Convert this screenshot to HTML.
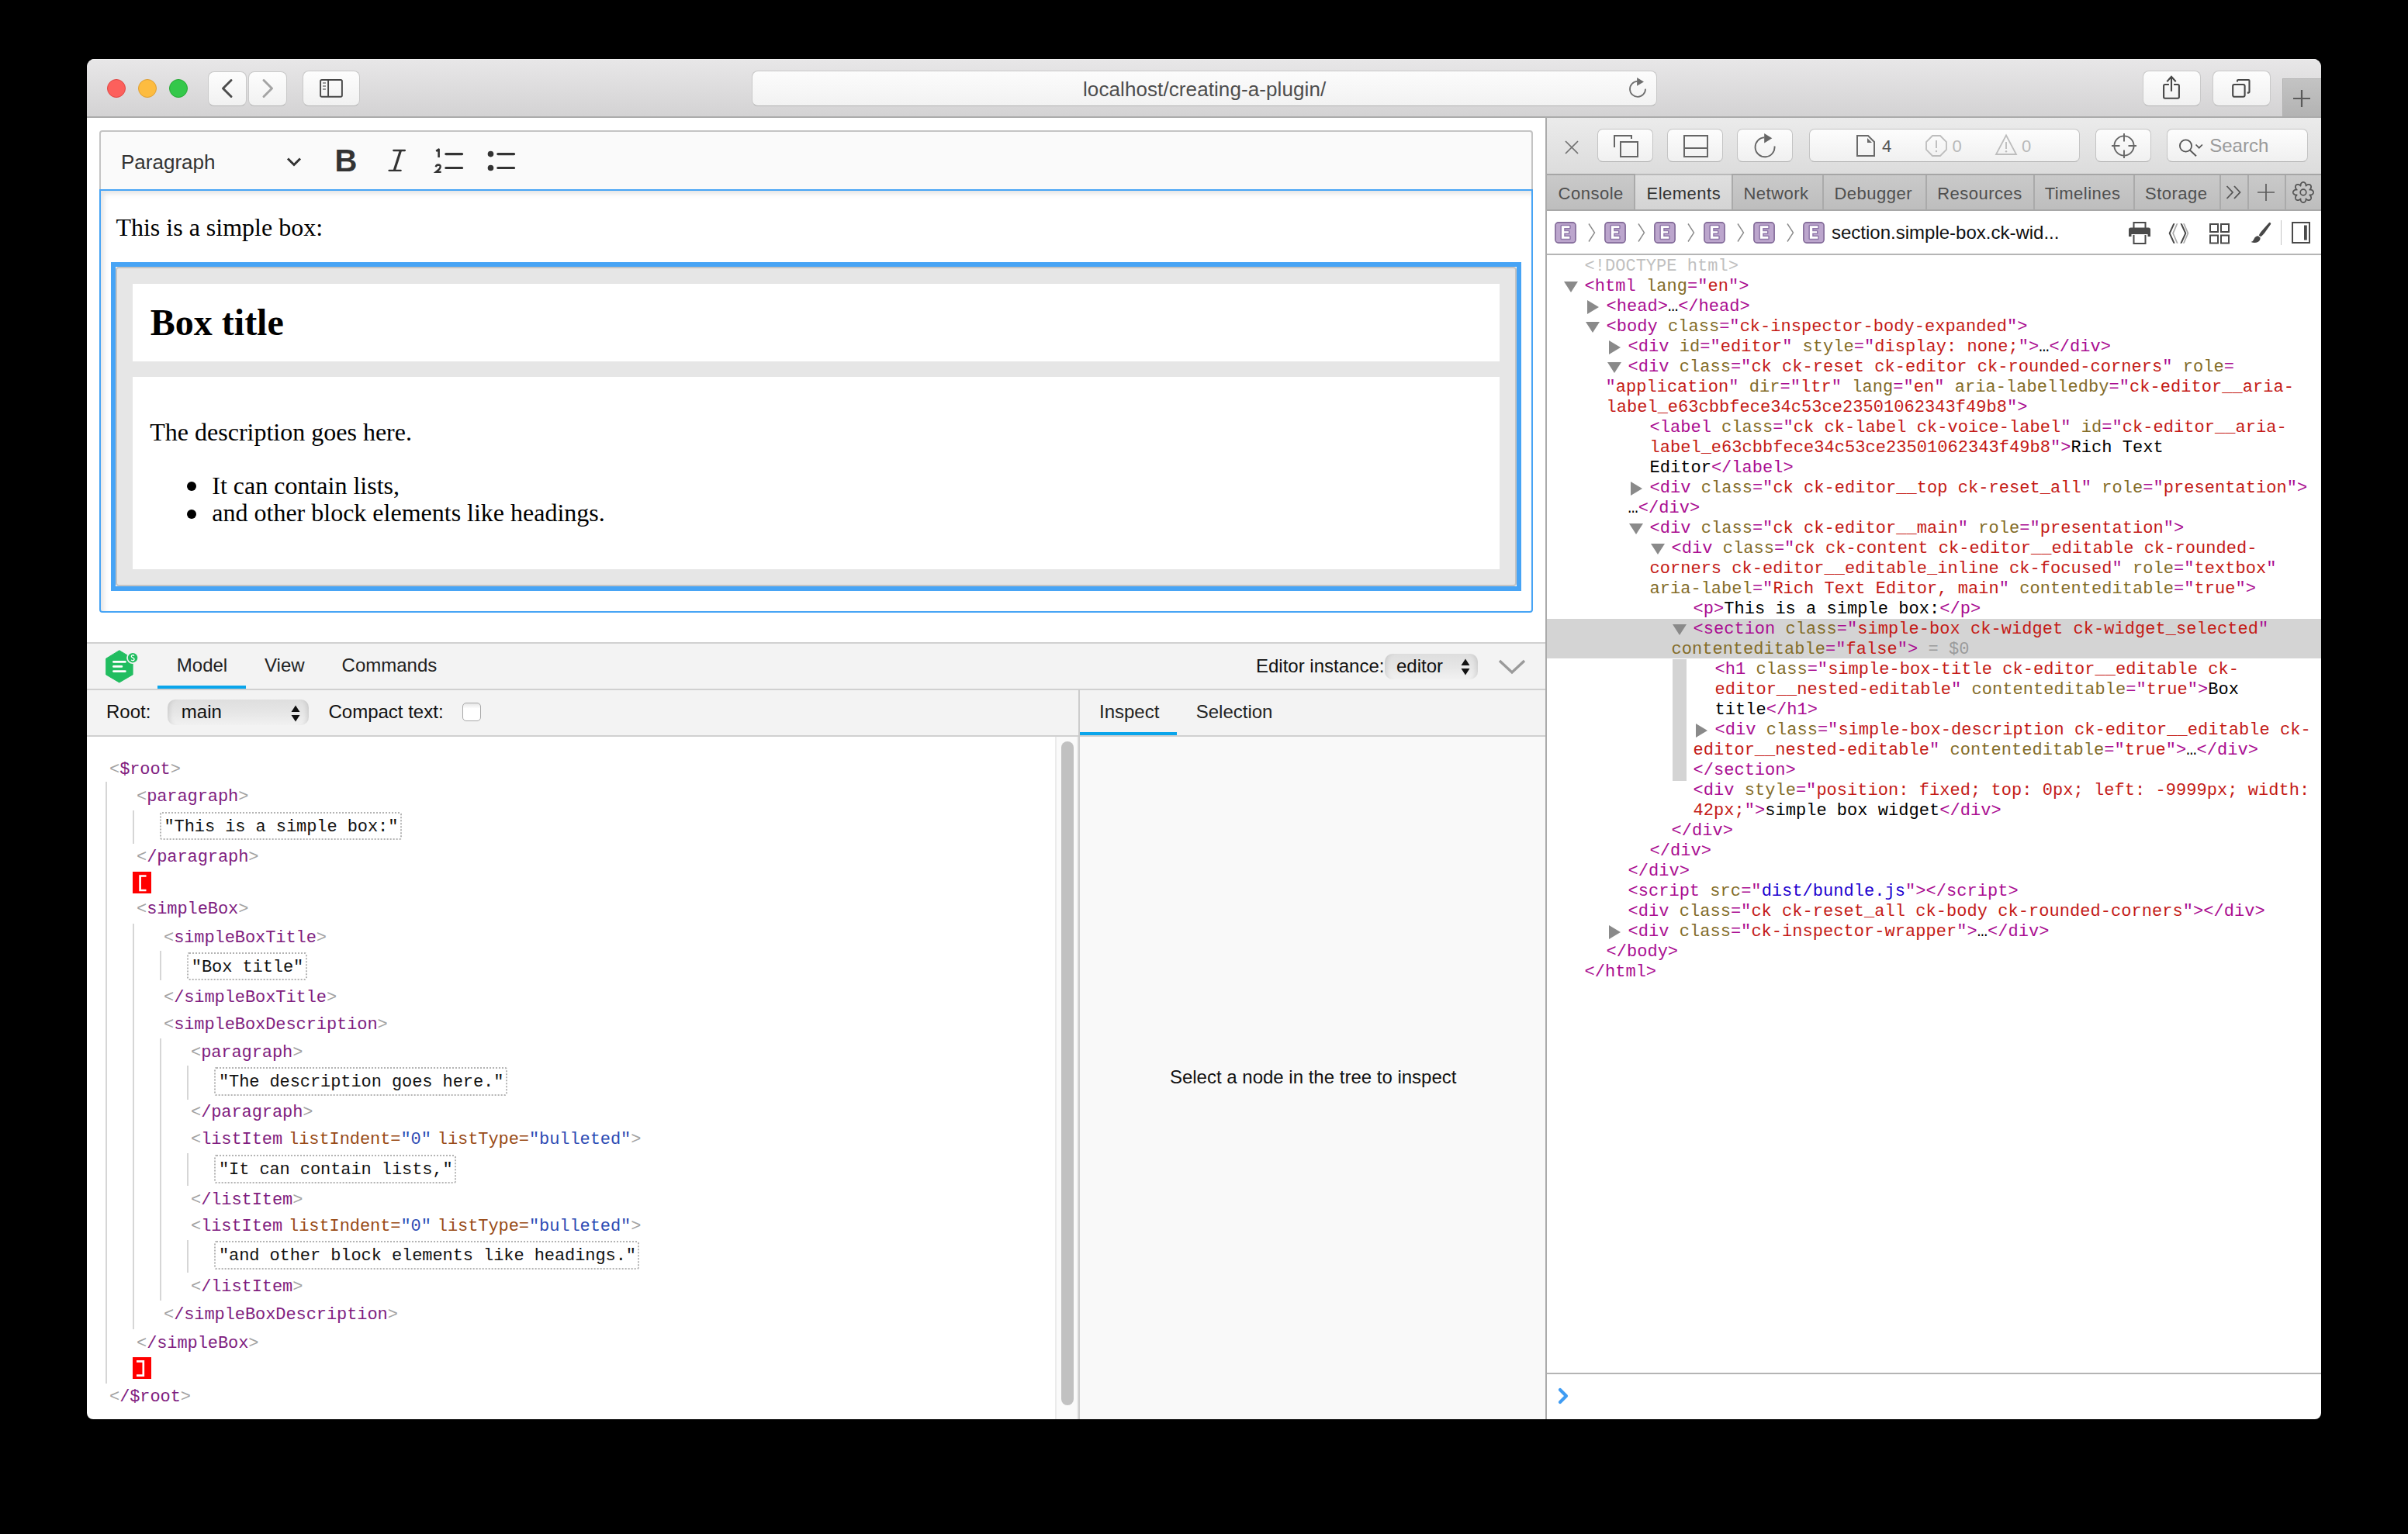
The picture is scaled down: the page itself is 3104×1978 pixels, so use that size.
<!DOCTYPE html><html><head><meta charset="utf-8"><style>html,body{margin:0;padding:0;background:#000;width:3104px;height:1978px;overflow:hidden;position:relative}</style></head><body><div style="position:absolute;left:112px;top:76px;width:2880px;height:1754px;background:#fff;border-radius:10px 10px 8px 8px;overflow:hidden"><div style="position:absolute;left:0;top:0;width:2880px;height:76px;background:linear-gradient(#e8e7e8,#d3d2d3);border-bottom:0"></div><div style="position:absolute;left:0;top:0;width:2880px;height:1px;background:#f2f2f2"></div><div style="position:absolute;left:0;top:74px;width:2880px;height:2px;background:#ababab"></div></div><div style="position:absolute;left:138px;top:102px;width:24px;height:24px;box-sizing:border-box;border-radius:50%;background:#fc605c;border:1px solid #df4744"></div><div style="position:absolute;left:178px;top:102px;width:24px;height:24px;box-sizing:border-box;border-radius:50%;background:#fdbc40;border:1px solid #de9f34"></div><div style="position:absolute;left:218px;top:102px;width:24px;height:24px;box-sizing:border-box;border-radius:50%;background:#34c84a;border:1px solid #27aa35"></div><div style="position:absolute;left:268px;top:92px;width:50px;height:45px;box-sizing:border-box;border:1px solid #c9c9c9;border-bottom-color:#b5b5b5;border-radius:8px;background:linear-gradient(#fdfdfd,#f1f1f1)"></div><div style="position:absolute;left:320px;top:92px;width:50px;height:45px;box-sizing:border-box;border:1px solid #c9c9c9;border-bottom-color:#b5b5b5;border-radius:8px;background:linear-gradient(#fdfdfd,#f1f1f1)"></div><svg style="position:absolute;left:284px;top:100px;" width="18" height="28" viewBox="0 0 18 28"><path d="M14 3.5 L3.5 14 L14 24.5" fill="none" stroke="#4d4d4d" stroke-width="3" stroke-linecap="round" stroke-linejoin="round"/></svg><svg style="position:absolute;left:336px;top:100px;" width="18" height="28" viewBox="0 0 18 28"><path d="M4 3.5 L14.5 14 L4 24.5" fill="none" stroke="#a4a4a4" stroke-width="3" stroke-linecap="round" stroke-linejoin="round"/></svg><div style="position:absolute;left:390px;top:91px;width:74px;height:46px;box-sizing:border-box;border:1px solid #c9c9c9;border-bottom-color:#b5b5b5;border-radius:8px;background:linear-gradient(#fdfdfd,#f1f1f1)"></div><svg style="position:absolute;left:410px;top:100px;" width="34" height="28" viewBox="0 0 34 28"><rect x="3.1" y="3" width="27.8" height="21.7" rx="1.8" fill="none" stroke="#474747" stroke-width="1.9"/><line x1="13.1" y1="3" x2="13.1" y2="24.7" stroke="#474747" stroke-width="1.9"/><path d="M6 7 H10 M6 11 H10 M6 15 H10" stroke="#7a7a7a" stroke-width="1.5"/></svg><div style="position:absolute;left:969px;top:91px;width:1167px;height:46px;box-sizing:border-box;border:1px solid #c8c8c8;border-bottom-color:#b3b3b3;border-radius:8px;background:linear-gradient(#fcfcfc,#f2f2f2)"></div><div style="position:absolute;left:1396px;top:99.79px;line-height:31px;font-size:26px;font-family:'Liberation Sans', sans-serif;color:#4d4d4d;font-weight:400;white-space:pre;letter-spacing:0.09px">localhost/creating-a-plugin/</div><svg style="position:absolute;left:2096px;top:98px;" width="30" height="30" viewBox="0 0 30 30"><path d="M14.6 6.9 A10 10 0 1 0 25 16.6" fill="none" stroke="#6e6e6e" stroke-width="1.8"/><path d="M14.1 2 L23 7.4 L14.1 12.8 Z" fill="#6e6e6e"/></svg><div style="position:absolute;left:2762px;top:91px;width:75px;height:46px;box-sizing:border-box;border:1px solid #c9c9c9;border-bottom-color:#b5b5b5;border-radius:8px;background:linear-gradient(#fdfdfd,#f1f1f1)"></div><div style="position:absolute;left:2852px;top:91px;width:75px;height:46px;box-sizing:border-box;border:1px solid #c9c9c9;border-bottom-color:#b5b5b5;border-radius:8px;background:linear-gradient(#fdfdfd,#f1f1f1)"></div><svg style="position:absolute;left:2786px;top:96px;" width="26" height="34" viewBox="0 0 26 34"><path d="M13 3.2 V21.7 M7.3 9.2 L13 2.9 L18.7 9.2" fill="none" stroke="#474747" stroke-width="2.1"/><path d="M9.9 13 H4.8 Q3.1 13 3.1 14.7 V29 Q3.1 30.7 4.8 30.7 H21.2 Q22.9 30.7 22.9 29 V14.7 Q22.9 13 21.2 13 H16.1" fill="none" stroke="#474747" stroke-width="2.1"/></svg><svg style="position:absolute;left:2875px;top:100px;" width="28" height="28" viewBox="0 0 28 28"><rect x="3.2" y="9" width="15.4" height="15.8" rx="2" fill="none" stroke="#474747" stroke-width="2.1"/><path d="M9 5.6 V4.1 Q9 3 10.1 3 H23.4 Q24.5 3 24.5 4.1 V18.5 Q24.5 19.6 23.4 19.6 H21.8" fill="none" stroke="#474747" stroke-width="2.1"/></svg><div style="position:absolute;left:2942px;top:101px;width:50px;height:49px;box-sizing:border-box;border-left:1px solid #b0b0b0;border-top:1px solid #b4b4b4;background:linear-gradient(#c3c3c3,#b3b3b3)"></div><svg style="position:absolute;left:2955px;top:115px;" width="24" height="24" viewBox="0 0 24 24"><path d="M12 1 V23 M1 12 H23" stroke="#5a5a5a" stroke-width="2.2"/></svg><div style="position:absolute;left:128px;top:168px;width:1848px;height:78px;box-sizing:border-box;background:#fafafa;border:2px solid #c4c4c4;border-bottom:0;border-radius:4px 4px 0 0"></div><div style="position:absolute;left:156px;top:194.09px;line-height:31px;font-size:26px;font-family:'Liberation Sans', sans-serif;color:#333;font-weight:400;white-space:pre;">Paragraph</div><svg style="position:absolute;left:368px;top:201px;" width="22" height="16" viewBox="0 0 22 16"><path d="M3 3.5 L11 11.5 L19 3.5" fill="none" stroke="#333" stroke-width="3"/></svg><div style="position:absolute;left:431.5px;top:183.13px;line-height:48px;font-size:40px;font-family:'Liberation Sans', sans-serif;color:#333;font-weight:700;white-space:pre;">B</div><svg style="position:absolute;left:495px;top:188px;" width="32" height="40" viewBox="0 0 32 40"><path d="M12.3 6 H26.9 M6.5 31.8 H21.7" stroke="#333" stroke-width="2.3" stroke-linecap="round"/><path d="M21.3 6.5 L13.4 31.3" stroke="#333" stroke-width="3.2"/></svg><svg style="position:absolute;left:555px;top:188px;" width="45" height="40" viewBox="0 0 45 40"><path d="M7.2 6.8 L10.6 4.6 V14.9" fill="none" stroke="#333" stroke-width="2.6" stroke-linejoin="round"/><path d="M6.8 27.2 Q7.2 24.6 9.9 24.5 Q12.8 24.6 12.7 27.2 Q12.5 29.3 10 31.3 L7 33.8 H13.6" fill="none" stroke="#333" stroke-width="2.4"/><path d="M19.8 10.6 H40.6 M19.8 28.5 H40.6" stroke="#333" stroke-width="3.2" stroke-linecap="round"/></svg><svg style="position:absolute;left:625px;top:188px;" width="42" height="40" viewBox="0 0 42 40"><circle cx="7.5" cy="10.6" r="3.8" fill="#333"/><circle cx="7.5" cy="28.5" r="3.8" fill="#333"/><path d="M16.8 10.6 H37.6 M16.8 28.5 H37.6" stroke="#333" stroke-width="3.2" stroke-linecap="round"/></svg><div style="position:absolute;left:128px;top:244px;width:1848px;height:546px;box-sizing:border-box;background:#fff;border:2px solid #47a4f5;border-radius:0 0 4px 4px;box-shadow:inset 4px 4px 6px rgba(0,0,0,0.1)"></div><div style="position:absolute;left:149.4px;top:274.20px;line-height:38px;font-size:32px;font-family:'Liberation Serif', serif;color:#000;font-weight:400;white-space:pre;">This is a simple box:</div><div style="position:absolute;left:143px;top:338px;width:1818px;height:424px;box-sizing:border-box;border:6px solid #47a4f5"></div><div style="position:absolute;left:149px;top:344px;width:1806px;height:412px;box-sizing:border-box;background:#e6e6e6;border:2px solid #c4c4c4;border-radius:4px"></div><div style="position:absolute;left:171px;top:366px;width:1762px;height:100px;background:#fff"></div><div style="position:absolute;left:193.8px;top:386.80px;line-height:58px;font-size:48px;font-family:'Liberation Serif', serif;color:#000;font-weight:700;white-space:pre;">Box title</div><div style="position:absolute;left:171px;top:486px;width:1762px;height:248px;background:#fff"></div><div style="position:absolute;left:193.3px;top:538.20px;line-height:38px;font-size:32px;font-family:'Liberation Serif', serif;color:#000;font-weight:400;white-space:pre;">The description goes here.</div><div style="position:absolute;left:240.5px;top:621.4px;width:12.0px;height:12.0px;border-radius:50%;background:#000"></div><div style="position:absolute;left:240.5px;top:656.9px;width:12.0px;height:12.0px;border-radius:50%;background:#000"></div><div style="position:absolute;left:273.3px;top:606.60px;line-height:38px;font-size:32px;font-family:'Liberation Serif', serif;color:#000;font-weight:400;white-space:pre;">It can contain lists,</div><div style="position:absolute;left:273.3px;top:642.10px;line-height:38px;font-size:32px;font-family:'Liberation Serif', serif;color:#000;font-weight:400;white-space:pre;">and other block elements like headings.</div><div style="position:absolute;left:112px;top:828px;width:1880px;height:2px;background:#d0d0d0"></div><div style="position:absolute;left:112px;top:830px;width:1880px;height:58px;background:#f3f3f3"></div><div style="position:absolute;left:112px;top:888px;width:1880px;height:2px;background:#d0d0d0"></div><div style="position:absolute;left:112px;top:890px;width:1880px;height:58px;background:#f3f3f3"></div><div style="position:absolute;left:112px;top:948px;width:1880px;height:2px;background:#d0d0d0"></div><svg style="position:absolute;left:134px;top:836px;" width="48" height="48" viewBox="0 0 48 48"><path d="M19.8 2.7 L37.1 13.2 V33.9 L19.8 44 L2.7 33.9 V13.2 Z" fill="#21bd60" stroke="#21bd60" stroke-width="1" stroke-linejoin="round"/><circle cx="37.1" cy="12.2" r="7.9" fill="#f3f3f3"/><circle cx="37.1" cy="12.2" r="6.2" fill="#21bd60"/><path d="M38.9 9.6 Q38.3 8.6 37.1 8.6 Q35.3 8.7 35.3 10.3 Q35.4 11.6 37.2 12.1 Q39.1 12.6 39.1 14.1 Q38.9 15.8 37.1 15.8 Q35.7 15.8 35.1 14.7" fill="none" stroke="#fff" stroke-width="1.3"/><path d="M12.4 17.4 H27.4 M12.4 23.4 H22.9 M12.4 29.6 H27.4" stroke="#fff" stroke-width="2.7" stroke-linecap="round"/></svg><div style="position:absolute;left:227.8px;top:843.18px;line-height:29px;font-size:24px;font-family:'Liberation Sans', sans-serif;color:#222;font-weight:400;white-space:pre;">Model</div><div style="position:absolute;left:203px;top:884px;width:114px;height:4px;background:#0aa5eb"></div><div style="position:absolute;left:341px;top:843.18px;line-height:29px;font-size:24px;font-family:'Liberation Sans', sans-serif;color:#222;font-weight:400;white-space:pre;">View</div><div style="position:absolute;left:440.6px;top:843.18px;line-height:29px;font-size:24px;font-family:'Liberation Sans', sans-serif;color:#222;font-weight:400;white-space:pre;">Commands</div><div style="position:absolute;left:1619px;top:843.58px;line-height:29px;font-size:24px;font-family:'Liberation Sans', sans-serif;color:#111;font-weight:400;white-space:pre;">Editor instance:</div><div style="position:absolute;left:1785px;top:842.5px;width:120px;height:33.0px;border-radius:10px;background:linear-gradient(#dedede,#e6e6e6 50%,#f1f1f1);box-shadow:inset 8px 0 6px -6px rgba(0,0,0,0.12),inset -8px 0 6px -6px rgba(0,0,0,0.12)"></div><div style="position:absolute;left:1800px;top:843.68px;line-height:29px;font-size:24px;font-family:'Liberation Sans', sans-serif;color:#111;font-weight:400;white-space:pre;">editor</div><svg style="position:absolute;left:1883px;top:849.0px;" width="12" height="22" viewBox="0 0 12 22"><path d="M6 0.5 L11.5 9 H0.5 Z M0.5 13 H11.5 L6 21.5 Z" fill="#111"/></svg><svg style="position:absolute;left:1930px;top:848px;" width="38" height="24" viewBox="0 0 38 24"><path d="M3 4 L19 19 L35 4" fill="none" stroke="#9a9a9a" stroke-width="3.4"/></svg><div style="position:absolute;left:137px;top:902.98px;line-height:29px;font-size:24px;font-family:'Liberation Sans', sans-serif;color:#111;font-weight:400;white-space:pre;">Root:</div><div style="position:absolute;left:216px;top:902px;width:182px;height:33px;border-radius:10px;background:linear-gradient(#dedede,#e6e6e6 50%,#f1f1f1);box-shadow:inset 8px 0 6px -6px rgba(0,0,0,0.12),inset -8px 0 6px -6px rgba(0,0,0,0.12)"></div><div style="position:absolute;left:233.8px;top:903.18px;line-height:29px;font-size:24px;font-family:'Liberation Sans', sans-serif;color:#111;font-weight:400;white-space:pre;">main</div><svg style="position:absolute;left:375px;top:908.5px;" width="12" height="22" viewBox="0 0 12 22"><path d="M6 0.5 L11.5 9 H0.5 Z M0.5 13 H11.5 L6 21.5 Z" fill="#111"/></svg><div style="position:absolute;left:423.5px;top:902.98px;line-height:29px;font-size:24px;font-family:'Liberation Sans', sans-serif;color:#111;font-weight:400;white-space:pre;">Compact text:</div><div style="position:absolute;left:596px;top:906px;width:24px;height:24px;box-sizing:border-box;border:1.5px solid #a8a8a8;border-radius:5px;background:linear-gradient(#e6e6e6,#fff 30%)"></div><div style="position:absolute;left:1390px;top:889px;width:2px;height:941px;background:#cccccc"></div><div style="position:absolute;left:1392px;top:950px;width:600px;height:880px;background:#f9f9f9"></div><div style="position:absolute;left:1417px;top:903.18px;line-height:29px;font-size:24px;font-family:'Liberation Sans', sans-serif;color:#222;font-weight:400;white-space:pre;">Inspect</div><div style="position:absolute;left:1392px;top:944px;width:125px;height:4px;background:#0aa5eb"></div><div style="position:absolute;left:1541.7px;top:903.18px;line-height:29px;font-size:24px;font-family:'Liberation Sans', sans-serif;color:#222;font-weight:400;white-space:pre;">Selection</div><div style="position:absolute;left:1507.9px;top:1373.88px;line-height:29px;font-size:24px;font-family:'Liberation Sans', sans-serif;color:#111;font-weight:400;white-space:pre;">Select a node in the tree to inspect</div><div style="position:absolute;left:1360px;top:950px;width:30px;height:880px;box-sizing:border-box;background:#fafafa;border-left:2px solid #ebebeb;border-right:2px solid #ebebeb"></div><div style="position:absolute;left:1368px;top:956px;width:16px;height:856px;border-radius:8px;background:#c1c1c1"></div><div style="position:absolute;left:141.0px;top:979.65px;line-height:26px;font-size:22px;font-family:'Liberation Mono', monospace;color:#7f1d80;font-weight:400;white-space:pre;letter-spacing:-0.08px"><span style="color:#a3a3a3">&lt;</span><span style="color:#7f1d80">$root</span><span style="color:#a3a3a3">&gt;</span></div><div style="position:absolute;left:136px;top:1008px;width:2px;height:776px;background:#d6d6d6"></div><div style="position:absolute;left:176.0px;top:1015.45px;line-height:26px;font-size:22px;font-family:'Liberation Mono', monospace;color:#7f1d80;font-weight:400;white-space:pre;letter-spacing:-0.08px"><span style="color:#a3a3a3">&lt;</span><span style="color:#7f1d80">paragraph</span><span style="color:#a3a3a3">&gt;</span></div><div style="position:absolute;left:171px;top:1044.5px;width:2px;height:43.5px;background:#d6d6d6"></div><div style="position:absolute;left:206px;top:1046.7px;width:311.76px;height:36.5px;box-sizing:border-box;border:2px dotted #b4b4b4;border-radius:3px"></div><div style="position:absolute;left:211.5px;top:1053.65px;line-height:26px;font-size:22px;font-family:'Liberation Mono', monospace;color:#111;font-weight:400;white-space:pre;letter-spacing:-0.08px">&quot;This is a simple box:&quot;</div><div style="position:absolute;left:176.0px;top:1093.05px;line-height:26px;font-size:22px;font-family:'Liberation Mono', monospace;color:#7f1d80;font-weight:400;white-space:pre;letter-spacing:-0.08px"><span style="color:#a3a3a3">&lt;</span><span style="color:#7f1d80">/paragraph</span><span style="color:#a3a3a3">&gt;</span></div><div style="position:absolute;left:171px;top:1124px;width:24px;height:28px;background:#ff0000"></div><svg style="position:absolute;left:171px;top:1124px;" width="24" height="28" viewBox="0 0 24 28"><path d="M17.5 5.5 H9.6 V24 H17.5" fill="none" stroke="#fff" stroke-width="2.7"/></svg><div style="position:absolute;left:176.0px;top:1160.45px;line-height:26px;font-size:22px;font-family:'Liberation Mono', monospace;color:#7f1d80;font-weight:400;white-space:pre;letter-spacing:-0.08px"><span style="color:#a3a3a3">&lt;</span><span style="color:#7f1d80">simpleBox</span><span style="color:#a3a3a3">&gt;</span></div><div style="position:absolute;left:171px;top:1190.5px;width:2px;height:523.5px;background:#d6d6d6"></div><div style="position:absolute;left:211.0px;top:1196.55px;line-height:26px;font-size:22px;font-family:'Liberation Mono', monospace;color:#7f1d80;font-weight:400;white-space:pre;letter-spacing:-0.08px"><span style="color:#a3a3a3">&lt;</span><span style="color:#7f1d80">simpleBoxTitle</span><span style="color:#a3a3a3">&gt;</span></div><div style="position:absolute;left:206px;top:1226px;width:2px;height:37.5px;background:#d6d6d6"></div><div style="position:absolute;left:241.3px;top:1227.9px;width:154.32px;height:36.5px;box-sizing:border-box;border:2px dotted #b4b4b4;border-radius:3px"></div><div style="position:absolute;left:246.8px;top:1234.85px;line-height:26px;font-size:22px;font-family:'Liberation Mono', monospace;color:#111;font-weight:400;white-space:pre;letter-spacing:-0.08px">&quot;Box title&quot;</div><div style="position:absolute;left:211.0px;top:1274.15px;line-height:26px;font-size:22px;font-family:'Liberation Mono', monospace;color:#7f1d80;font-weight:400;white-space:pre;letter-spacing:-0.08px"><span style="color:#a3a3a3">&lt;</span><span style="color:#7f1d80">/simpleBoxTitle</span><span style="color:#a3a3a3">&gt;</span></div><div style="position:absolute;left:211.0px;top:1309.15px;line-height:26px;font-size:22px;font-family:'Liberation Mono', monospace;color:#7f1d80;font-weight:400;white-space:pre;letter-spacing:-0.08px"><span style="color:#a3a3a3">&lt;</span><span style="color:#7f1d80">simpleBoxDescription</span><span style="color:#a3a3a3">&gt;</span></div><div style="position:absolute;left:206px;top:1338.5px;width:2px;height:338.5px;background:#d6d6d6"></div><div style="position:absolute;left:246.0px;top:1344.85px;line-height:26px;font-size:22px;font-family:'Liberation Mono', monospace;color:#7f1d80;font-weight:400;white-space:pre;letter-spacing:-0.08px"><span style="color:#a3a3a3">&lt;</span><span style="color:#7f1d80">paragraph</span><span style="color:#a3a3a3">&gt;</span></div><div style="position:absolute;left:241px;top:1374px;width:2px;height:43.5px;background:#d6d6d6"></div><div style="position:absolute;left:276.4px;top:1376.3px;width:377.36px;height:36.5px;box-sizing:border-box;border:2px dotted #b4b4b4;border-radius:3px"></div><div style="position:absolute;left:281.9px;top:1383.25px;line-height:26px;font-size:22px;font-family:'Liberation Mono', monospace;color:#111;font-weight:400;white-space:pre;letter-spacing:-0.08px">&quot;The description goes here.&quot;</div><div style="position:absolute;left:246.0px;top:1422.15px;line-height:26px;font-size:22px;font-family:'Liberation Mono', monospace;color:#7f1d80;font-weight:400;white-space:pre;letter-spacing:-0.08px"><span style="color:#a3a3a3">&lt;</span><span style="color:#7f1d80">/paragraph</span><span style="color:#a3a3a3">&gt;</span></div><div style="position:absolute;left:246.0px;top:1457.15px;line-height:26px;font-size:22px;font-family:'Liberation Mono', monospace;color:#7f1d80;font-weight:400;white-space:pre;letter-spacing:-0.08px"><span style="color:#a3a3a3">&lt;</span><span style="color:#7f1d80">listItem</span><span style="color:#994b16;margin-left:8px">listIndent=</span><span style="color:#2c4bb4">"0"</span><span style="color:#994b16;margin-left:8px">listType=</span><span style="color:#2c4bb4">"bulleted"</span><span style="color:#a3a3a3">&gt;</span></div><div style="position:absolute;left:241px;top:1486.5px;width:2px;height:42.5px;background:#d6d6d6"></div><div style="position:absolute;left:276.4px;top:1489px;width:311.76px;height:36.5px;box-sizing:border-box;border:2px dotted #b4b4b4;border-radius:3px"></div><div style="position:absolute;left:281.9px;top:1495.95px;line-height:26px;font-size:22px;font-family:'Liberation Mono', monospace;color:#111;font-weight:400;white-space:pre;letter-spacing:-0.08px">&quot;It can contain lists,&quot;</div><div style="position:absolute;left:246.0px;top:1535.05px;line-height:26px;font-size:22px;font-family:'Liberation Mono', monospace;color:#7f1d80;font-weight:400;white-space:pre;letter-spacing:-0.08px"><span style="color:#a3a3a3">&lt;</span><span style="color:#7f1d80">/listItem</span><span style="color:#a3a3a3">&gt;</span></div><div style="position:absolute;left:246.0px;top:1569.25px;line-height:26px;font-size:22px;font-family:'Liberation Mono', monospace;color:#7f1d80;font-weight:400;white-space:pre;letter-spacing:-0.08px"><span style="color:#a3a3a3">&lt;</span><span style="color:#7f1d80">listItem</span><span style="color:#994b16;margin-left:8px">listIndent=</span><span style="color:#2c4bb4">"0"</span><span style="color:#994b16;margin-left:8px">listType=</span><span style="color:#2c4bb4">"bulleted"</span><span style="color:#a3a3a3">&gt;</span></div><div style="position:absolute;left:241px;top:1598.5px;width:2px;height:42.5px;background:#d6d6d6"></div><div style="position:absolute;left:276.4px;top:1600.4px;width:547.92px;height:36.5px;box-sizing:border-box;border:2px dotted #b4b4b4;border-radius:3px"></div><div style="position:absolute;left:281.9px;top:1607.35px;line-height:26px;font-size:22px;font-family:'Liberation Mono', monospace;color:#111;font-weight:400;white-space:pre;letter-spacing:-0.08px">&quot;and other block elements like headings.&quot;</div><div style="position:absolute;left:246.0px;top:1647.35px;line-height:26px;font-size:22px;font-family:'Liberation Mono', monospace;color:#7f1d80;font-weight:400;white-space:pre;letter-spacing:-0.08px"><span style="color:#a3a3a3">&lt;</span><span style="color:#7f1d80">/listItem</span><span style="color:#a3a3a3">&gt;</span></div><div style="position:absolute;left:211.0px;top:1682.95px;line-height:26px;font-size:22px;font-family:'Liberation Mono', monospace;color:#7f1d80;font-weight:400;white-space:pre;letter-spacing:-0.08px"><span style="color:#a3a3a3">&lt;</span><span style="color:#7f1d80">/simpleBoxDescription</span><span style="color:#a3a3a3">&gt;</span></div><div style="position:absolute;left:176.0px;top:1719.75px;line-height:26px;font-size:22px;font-family:'Liberation Mono', monospace;color:#7f1d80;font-weight:400;white-space:pre;letter-spacing:-0.08px"><span style="color:#a3a3a3">&lt;</span><span style="color:#7f1d80">/simpleBox</span><span style="color:#a3a3a3">&gt;</span></div><div style="position:absolute;left:171px;top:1750px;width:24px;height:28px;background:#ff0000"></div><svg style="position:absolute;left:171px;top:1750px;" width="24" height="28" viewBox="0 0 24 28"><path d="M5 5.4 H13.8 V23.6 H5" fill="none" stroke="#fff" stroke-width="2.7"/></svg><div style="position:absolute;left:141.0px;top:1788.55px;line-height:26px;font-size:22px;font-family:'Liberation Mono', monospace;color:#7f1d80;font-weight:400;white-space:pre;letter-spacing:-0.08px"><span style="color:#a3a3a3">&lt;</span><span style="color:#7f1d80">/$root</span><span style="color:#a3a3a3">&gt;</span></div><div style="position:absolute;left:1992px;top:152px;width:2px;height:1678px;background:#ababab"></div><div style="position:absolute;left:1994px;top:152px;width:998px;height:72px;background:linear-gradient(#ebebeb,#dcdcdc)"></div><svg style="position:absolute;left:2016px;top:180px;" width="20" height="20" viewBox="0 0 20 20"><path d="M2 2 L18 18 M18 2 L2 18" stroke="#707070" stroke-width="1.7"/></svg><div style="position:absolute;left:2059px;top:166px;width:72px;height:43px;box-sizing:border-box;border:1px solid #c4c4c4;border-bottom-color:#aeaeae;border-radius:7px;background:linear-gradient(#fdfdfd,#f0f0f0)"></div><svg style="position:absolute;left:2078px;top:172px;" width="36" height="32" viewBox="0 0 36 32"><path d="M3 18 V3 H25 V7" fill="none" stroke="#666" stroke-width="2"/><rect x="11" y="11" width="22" height="19" fill="none" stroke="#666" stroke-width="2"/></svg><div style="position:absolute;left:2149px;top:166px;width:72px;height:43px;box-sizing:border-box;border:1px solid #c4c4c4;border-bottom-color:#aeaeae;border-radius:7px;background:linear-gradient(#fdfdfd,#f0f0f0)"></div><svg style="position:absolute;left:2168px;top:172px;" width="36" height="32" viewBox="0 0 36 32"><rect x="3" y="3" width="30" height="27" fill="none" stroke="#666" stroke-width="2"/><path d="M3 19 H33" stroke="#666" stroke-width="2"/></svg><div style="position:absolute;left:2239px;top:166px;width:72px;height:43px;box-sizing:border-box;border:1px solid #c4c4c4;border-bottom-color:#aeaeae;border-radius:7px;background:linear-gradient(#fdfdfd,#f0f0f0)"></div><svg style="position:absolute;left:2258px;top:170px;" width="36" height="36" viewBox="0 0 36 36"><path d="M16.5 7.3 A12.5 12.5 0 1 0 29.5 18.5" fill="none" stroke="#666" stroke-width="1.9"/><path d="M16.2 2 L26.3 8.2 L16.2 14.4 Z" fill="#666"/></svg><div style="position:absolute;left:2332px;top:166px;width:349px;height:43px;box-sizing:border-box;border:1px solid #c4c4c4;border-bottom-color:#aeaeae;border-radius:7px;background:linear-gradient(#fdfdfd,#f0f0f0)"></div><svg style="position:absolute;left:2391px;top:172px;" width="28" height="32" viewBox="0 0 28 32"><path d="M3 3 H17 L25 11 V29 H3 Z" fill="none" stroke="#6a6a6a" stroke-width="2"/><path d="M16 6 L22 12 H16 Z" fill="#6a6a6a"/></svg><div style="position:absolute;left:2426px;top:176.47px;line-height:26px;font-size:22px;font-family:'Liberation Sans', sans-serif;color:#555;font-weight:400;white-space:pre;">4</div><svg style="position:absolute;left:2481px;top:173px;" width="30" height="30" viewBox="0 0 30 30"><path d="M10 2 H20 L28 10 V20 L20 28 H10 L2 20 V10 Z" fill="none" stroke="#bdbdbd" stroke-width="1.8"/><path d="M15 8 V18" stroke="#bdbdbd" stroke-width="1.9"/><circle cx="15" cy="22" r="1.2" fill="#bdbdbd"/></svg><div style="position:absolute;left:2516.4px;top:176.47px;line-height:26px;font-size:22px;font-family:'Liberation Sans', sans-serif;color:#b8b8b8;font-weight:400;white-space:pre;">0</div><svg style="position:absolute;left:2571px;top:172px;" width="30" height="30" viewBox="0 0 30 30"><path d="M15 2.5 L28 27 H2 Z" fill="none" stroke="#bdbdbd" stroke-width="1.8" stroke-linejoin="miter"/><path d="M15 11 V20" stroke="#bdbdbd" stroke-width="1.9"/><circle cx="15" cy="23.3" r="1.2" fill="#bdbdbd"/></svg><div style="position:absolute;left:2606px;top:176.47px;line-height:26px;font-size:22px;font-family:'Liberation Sans', sans-serif;color:#b8b8b8;font-weight:400;white-space:pre;">0</div><div style="position:absolute;left:2701px;top:166px;width:72px;height:43px;box-sizing:border-box;border:1px solid #c4c4c4;border-bottom-color:#aeaeae;border-radius:7px;background:linear-gradient(#fdfdfd,#f0f0f0)"></div><svg style="position:absolute;left:2720px;top:170px;" width="36" height="36" viewBox="0 0 36 36"><circle cx="18" cy="18" r="12.6" fill="none" stroke="#666" stroke-width="1.9"/><path d="M2 18 H12.5 M23.5 18 H34 M18 2 V12.5 M18 23.5 V34" stroke="#666" stroke-width="1.9"/></svg><div style="position:absolute;left:2793px;top:166px;width:182px;height:43px;box-sizing:border-box;border:1px solid #c4c4c4;border-bottom-color:#aeaeae;border-radius:7px;background:linear-gradient(#fdfdfd,#f0f0f0)"></div><svg style="position:absolute;left:2806px;top:176px;" width="40" height="30" viewBox="0 0 40 30"><circle cx="11.5" cy="12" r="7.6" fill="none" stroke="#555" stroke-width="1.8"/><path d="M16.8 17.5 L25 25.3" stroke="#555" stroke-width="1.9"/><path d="M24.5 10.5 L28.7 14.7 L32.9 10.5" fill="none" stroke="#555" stroke-width="1.7"/></svg><div style="position:absolute;left:2848.2px;top:173.28px;line-height:29px;font-size:24px;font-family:'Liberation Sans', sans-serif;color:#9a9a9a;font-weight:400;white-space:pre;">Search</div><div style="position:absolute;left:1994px;top:224px;width:998px;height:48px;background:linear-gradient(#cacaca,#bdbdbd)"></div><div style="position:absolute;left:2108px;top:226px;width:124px;height:44px;background:linear-gradient(#dfdfdf,#d4d4d4)"></div><div style="position:absolute;left:1994px;top:224px;width:998px;height:2px;background:#a6a6a6"></div><div style="position:absolute;left:2108px;top:224px;width:124px;height:2px;background:#b9b9b9"></div><div style="position:absolute;left:1994px;top:270px;width:998px;height:2px;background:#a8a8a8"></div><div style="position:absolute;left:2106px;top:226px;width:2px;height:44px;background:#aaaaaa"></div><div style="position:absolute;left:2232px;top:226px;width:2px;height:44px;background:#aaaaaa"></div><div style="position:absolute;left:2349px;top:226px;width:2px;height:44px;background:#aaaaaa"></div><div style="position:absolute;left:2482px;top:226px;width:2px;height:44px;background:#aaaaaa"></div><div style="position:absolute;left:2621px;top:226px;width:2px;height:44px;background:#aaaaaa"></div><div style="position:absolute;left:2750px;top:226px;width:2px;height:44px;background:#aaaaaa"></div><div style="position:absolute;left:2861px;top:226px;width:2px;height:44px;background:#aaaaaa"></div><div style="position:absolute;left:2897px;top:226px;width:2px;height:44px;background:#aaaaaa"></div><div style="position:absolute;left:2945px;top:226px;width:2px;height:44px;background:#aaaaaa"></div><div style="position:absolute;left:2008.6px;top:237.17px;line-height:26px;font-size:22px;font-family:'Liberation Sans', sans-serif;color:#4f4f4f;font-weight:400;white-space:pre;letter-spacing:0.5px">Console</div><div style="position:absolute;left:2122.5px;top:237.17px;line-height:26px;font-size:22px;font-family:'Liberation Sans', sans-serif;color:#333;font-weight:400;white-space:pre;letter-spacing:0.5px">Elements</div><div style="position:absolute;left:2247.4px;top:237.17px;line-height:26px;font-size:22px;font-family:'Liberation Sans', sans-serif;color:#4f4f4f;font-weight:400;white-space:pre;letter-spacing:0.5px">Network</div><div style="position:absolute;left:2364.4px;top:237.17px;line-height:26px;font-size:22px;font-family:'Liberation Sans', sans-serif;color:#4f4f4f;font-weight:400;white-space:pre;letter-spacing:0.5px">Debugger</div><div style="position:absolute;left:2497.2px;top:237.17px;line-height:26px;font-size:22px;font-family:'Liberation Sans', sans-serif;color:#4f4f4f;font-weight:400;white-space:pre;letter-spacing:0.5px">Resources</div><div style="position:absolute;left:2635.7px;top:237.17px;line-height:26px;font-size:22px;font-family:'Liberation Sans', sans-serif;color:#4f4f4f;font-weight:400;white-space:pre;letter-spacing:0.5px">Timelines</div><div style="position:absolute;left:2765px;top:237.17px;line-height:26px;font-size:22px;font-family:'Liberation Sans', sans-serif;color:#4f4f4f;font-weight:400;white-space:pre;letter-spacing:0.5px">Storage</div><svg style="position:absolute;left:2868px;top:238px;" width="24" height="20" viewBox="0 0 24 20"><path d="M2.5 2 L10 10 L2.5 18 M12 2 L19.5 10 L12 18" fill="none" stroke="#555" stroke-width="1.8"/></svg><svg style="position:absolute;left:2909px;top:236px;" width="24" height="24" viewBox="0 0 24 24"><path d="M12 1 V23 M1 12 H23" stroke="#5c5c5c" stroke-width="1.7"/></svg><svg style="position:absolute;left:2954px;top:233px;" width="30" height="30" viewBox="0 0 30 30"><path d="M15.00 1.90 L15.34 1.92 L15.68 1.99 L16.02 2.09 L16.34 2.24 L16.66 2.43 L16.96 2.66 L17.24 2.92 L17.50 3.23 L17.74 3.57 L17.96 3.95 L18.15 4.37 L18.31 4.82 L18.43 5.33 L18.50 5.89 L18.44 6.69 L18.97 6.09 L19.42 5.74 L19.86 5.47 L20.29 5.26 L20.72 5.09 L21.14 4.98 L21.55 4.91 L21.96 4.88 L22.35 4.89 L22.72 4.94 L23.07 5.03 L23.41 5.15 L23.72 5.31 L24.01 5.51 L24.26 5.74 L24.49 5.99 L24.69 6.28 L24.85 6.59 L24.97 6.93 L25.06 7.28 L25.11 7.65 L25.12 8.04 L25.09 8.45 L25.02 8.86 L24.91 9.28 L24.74 9.71 L24.53 10.14 L24.26 10.58 L23.91 11.03 L23.31 11.56 L24.11 11.50 L24.67 11.57 L25.18 11.69 L25.63 11.85 L26.05 12.04 L26.43 12.26 L26.77 12.50 L27.08 12.76 L27.34 13.04 L27.57 13.34 L27.76 13.66 L27.91 13.98 L28.01 14.32 L28.08 14.66 L28.10 15.00 L28.08 15.34 L28.01 15.68 L27.91 16.02 L27.76 16.34 L27.57 16.66 L27.34 16.96 L27.08 17.24 L26.77 17.50 L26.43 17.74 L26.05 17.96 L25.63 18.15 L25.18 18.31 L24.67 18.43 L24.11 18.50 L23.31 18.44 L23.91 18.97 L24.26 19.42 L24.53 19.86 L24.74 20.29 L24.91 20.72 L25.02 21.14 L25.09 21.55 L25.12 21.96 L25.11 22.35 L25.06 22.72 L24.97 23.07 L24.85 23.41 L24.69 23.72 L24.49 24.01 L24.26 24.26 L24.01 24.49 L23.72 24.69 L23.41 24.85 L23.07 24.97 L22.72 25.06 L22.35 25.11 L21.96 25.12 L21.55 25.09 L21.14 25.02 L20.72 24.91 L20.29 24.74 L19.86 24.53 L19.42 24.26 L18.97 23.91 L18.44 23.31 L18.50 24.11 L18.43 24.67 L18.31 25.18 L18.15 25.63 L17.96 26.05 L17.74 26.43 L17.50 26.77 L17.24 27.08 L16.96 27.34 L16.66 27.57 L16.34 27.76 L16.02 27.91 L15.68 28.01 L15.34 28.08 L15.00 28.10 L14.66 28.08 L14.32 28.01 L13.98 27.91 L13.66 27.76 L13.34 27.57 L13.04 27.34 L12.76 27.08 L12.50 26.77 L12.26 26.43 L12.04 26.05 L11.85 25.63 L11.69 25.18 L11.57 24.67 L11.50 24.11 L11.56 23.31 L11.03 23.91 L10.58 24.26 L10.14 24.53 L9.71 24.74 L9.28 24.91 L8.86 25.02 L8.45 25.09 L8.04 25.12 L7.65 25.11 L7.28 25.06 L6.93 24.97 L6.59 24.85 L6.28 24.69 L5.99 24.49 L5.74 24.26 L5.51 24.01 L5.31 23.72 L5.15 23.41 L5.03 23.07 L4.94 22.72 L4.89 22.35 L4.88 21.96 L4.91 21.55 L4.98 21.14 L5.09 20.72 L5.26 20.29 L5.47 19.86 L5.74 19.42 L6.09 18.97 L6.69 18.44 L5.89 18.50 L5.33 18.43 L4.82 18.31 L4.37 18.15 L3.95 17.96 L3.57 17.74 L3.23 17.50 L2.92 17.24 L2.66 16.96 L2.43 16.66 L2.24 16.34 L2.09 16.02 L1.99 15.68 L1.92 15.34 L1.90 15.00 L1.92 14.66 L1.99 14.32 L2.09 13.98 L2.24 13.66 L2.43 13.34 L2.66 13.04 L2.92 12.76 L3.23 12.50 L3.57 12.26 L3.95 12.04 L4.37 11.85 L4.82 11.69 L5.33 11.57 L5.89 11.50 L6.69 11.56 L6.09 11.03 L5.74 10.58 L5.47 10.14 L5.26 9.71 L5.09 9.28 L4.98 8.86 L4.91 8.45 L4.88 8.04 L4.89 7.65 L4.94 7.28 L5.03 6.93 L5.15 6.59 L5.31 6.28 L5.51 5.99 L5.74 5.74 L5.99 5.51 L6.28 5.31 L6.59 5.15 L6.93 5.03 L7.28 4.94 L7.65 4.89 L8.04 4.88 L8.45 4.91 L8.86 4.98 L9.28 5.09 L9.71 5.26 L10.14 5.47 L10.58 5.74 L11.03 6.09 L11.56 6.69 L11.50 5.89 L11.57 5.33 L11.69 4.82 L11.85 4.37 L12.04 3.95 L12.26 3.57 L12.50 3.23 L12.76 2.92 L13.04 2.66 L13.34 2.43 L13.66 2.24 L13.98 2.09 L14.32 1.99 L14.66 1.92 Z" fill="none" stroke="#555" stroke-width="1.8" stroke-linejoin="round"/><circle cx="15" cy="15" r="3.8" fill="none" stroke="#555" stroke-width="1.7"/></svg><div style="position:absolute;left:1994px;top:272px;width:998px;height:57px;background:#fff"></div><div style="position:absolute;left:1994px;top:327px;width:998px;height:2px;background:#b5b5b5"></div><svg style="position:absolute;left:2004px;top:286px;" width="28" height="28" viewBox="0 0 28 28"><rect x="0.9" y="0.9" width="26.2" height="26.2" rx="4" fill="#bca6cd" stroke="#806897" stroke-width="1.6"/><path d="M8.9 5.3 H19.3 V8 H12.2 V12.3 H18 V14.6 H12.2 V19 H19.3 V21.7 H8.9 Z" fill="#fff" stroke="#9078aa" stroke-width="3" stroke-linejoin="round" paint-order="stroke"/></svg><svg style="position:absolute;left:2046px;top:287px;" width="12" height="26" viewBox="0 0 12 26"><path d="M2 1.5 L9.5 13 L2 24.5" fill="none" stroke="#8a8a8a" stroke-width="1.4"/></svg><svg style="position:absolute;left:2068px;top:286px;" width="28" height="28" viewBox="0 0 28 28"><rect x="0.9" y="0.9" width="26.2" height="26.2" rx="4" fill="#bca6cd" stroke="#806897" stroke-width="1.6"/><path d="M8.9 5.3 H19.3 V8 H12.2 V12.3 H18 V14.6 H12.2 V19 H19.3 V21.7 H8.9 Z" fill="#fff" stroke="#9078aa" stroke-width="3" stroke-linejoin="round" paint-order="stroke"/></svg><svg style="position:absolute;left:2110px;top:287px;" width="12" height="26" viewBox="0 0 12 26"><path d="M2 1.5 L9.5 13 L2 24.5" fill="none" stroke="#8a8a8a" stroke-width="1.4"/></svg><svg style="position:absolute;left:2132px;top:286px;" width="28" height="28" viewBox="0 0 28 28"><rect x="0.9" y="0.9" width="26.2" height="26.2" rx="4" fill="#bca6cd" stroke="#806897" stroke-width="1.6"/><path d="M8.9 5.3 H19.3 V8 H12.2 V12.3 H18 V14.6 H12.2 V19 H19.3 V21.7 H8.9 Z" fill="#fff" stroke="#9078aa" stroke-width="3" stroke-linejoin="round" paint-order="stroke"/></svg><svg style="position:absolute;left:2174px;top:287px;" width="12" height="26" viewBox="0 0 12 26"><path d="M2 1.5 L9.5 13 L2 24.5" fill="none" stroke="#8a8a8a" stroke-width="1.4"/></svg><svg style="position:absolute;left:2196px;top:286px;" width="28" height="28" viewBox="0 0 28 28"><rect x="0.9" y="0.9" width="26.2" height="26.2" rx="4" fill="#bca6cd" stroke="#806897" stroke-width="1.6"/><path d="M8.9 5.3 H19.3 V8 H12.2 V12.3 H18 V14.6 H12.2 V19 H19.3 V21.7 H8.9 Z" fill="#fff" stroke="#9078aa" stroke-width="3" stroke-linejoin="round" paint-order="stroke"/></svg><svg style="position:absolute;left:2238px;top:287px;" width="12" height="26" viewBox="0 0 12 26"><path d="M2 1.5 L9.5 13 L2 24.5" fill="none" stroke="#8a8a8a" stroke-width="1.4"/></svg><svg style="position:absolute;left:2260px;top:286px;" width="28" height="28" viewBox="0 0 28 28"><rect x="0.9" y="0.9" width="26.2" height="26.2" rx="4" fill="#bca6cd" stroke="#806897" stroke-width="1.6"/><path d="M8.9 5.3 H19.3 V8 H12.2 V12.3 H18 V14.6 H12.2 V19 H19.3 V21.7 H8.9 Z" fill="#fff" stroke="#9078aa" stroke-width="3" stroke-linejoin="round" paint-order="stroke"/></svg><svg style="position:absolute;left:2302px;top:287px;" width="12" height="26" viewBox="0 0 12 26"><path d="M2 1.5 L9.5 13 L2 24.5" fill="none" stroke="#8a8a8a" stroke-width="1.4"/></svg><svg style="position:absolute;left:2324px;top:286px;" width="28" height="28" viewBox="0 0 28 28"><rect x="0.9" y="0.9" width="26.2" height="26.2" rx="4" fill="#bca6cd" stroke="#806897" stroke-width="1.6"/><path d="M8.9 5.3 H19.3 V8 H12.2 V12.3 H18 V14.6 H12.2 V19 H19.3 V21.7 H8.9 Z" fill="#fff" stroke="#9078aa" stroke-width="3" stroke-linejoin="round" paint-order="stroke"/></svg><div style="position:absolute;left:2361px;top:284.68px;line-height:29px;font-size:24px;font-family:'Liberation Sans', sans-serif;color:#111;font-weight:400;white-space:pre;">section.simple-box.ck-wid...</div><svg style="position:absolute;left:2742px;top:284px;" width="32" height="32" viewBox="0 0 32 32"><path d="M8.5 10 V3 H23.5 V10" fill="none" stroke="#4a4a4a" stroke-width="2"/><path d="M2 21 V12 Q2 9.5 4.5 9.5 H27.5 Q30 9.5 30 12 V21 H26.5 V18 H5.5 V21 Z" fill="#4a4a4a"/><path d="M8.5 19 V30 H23.5 V19" fill="none" stroke="#4a4a4a" stroke-width="2"/></svg><svg style="position:absolute;left:2794px;top:286px;" width="30" height="30" viewBox="0 0 30 30"><defs><clipPath id="cpc"><rect x="0" y="2.2" width="30" height="25.5"/></clipPath></defs><g clip-path="url(#cpc)"><path d="M13.9 -1 L7.1 14.8 L13.9 30.6 M19.6 -1 L26.4 14.8 L19.6 30.6" fill="none" stroke="#aaaaaa" stroke-width="1.7"/><path d="M9.9 -1 L2.7 14.8 L9.9 30.6 M16.1 -1 L23.3 14.8 L16.1 30.6" fill="none" stroke="#474747" stroke-width="2"/></g></svg><svg style="position:absolute;left:2846px;top:286px;" width="30" height="30" viewBox="0 0 30 30"><rect x="3" y="3" width="10" height="10" fill="none" stroke="#4a4a4a" stroke-width="2"/><rect x="17" y="3" width="10" height="10" fill="none" stroke="#4a4a4a" stroke-width="2"/><rect x="3" y="17.5" width="10" height="10" fill="none" stroke="#4a4a4a" stroke-width="2"/><rect x="17" y="17.5" width="10" height="10" fill="none" stroke="#4a4a4a" stroke-width="2"/></svg><svg style="position:absolute;left:2899px;top:285px;" width="30" height="30" viewBox="0 0 30 30"><path d="M27.2 1.9 Q29 2.6 28 4.2 L20 15.6 Q18.2 18.1 15.2 20.2 L12.8 18.4 Q14 15.6 16.3 13 L25.6 2.6 Q26.4 1.7 27.2 1.9 Z" fill="#474747"/><path d="M12.3 19.6 L14.6 21.4 Q14.8 25.3 11.5 27 Q7.5 28.8 2.5 27 Q5.4 26.6 6.3 23.6 Q7.2 20.3 10 19.5 Q11.3 19.2 12.3 19.6 Z" fill="#474747"/></svg><div style="position:absolute;left:2939.5px;top:284px;width:1.5px;height:32px;background:#c4c4c4"></div><svg style="position:absolute;left:2952px;top:284px;" width="28" height="32" viewBox="0 0 28 32"><rect x="3" y="3" width="22" height="26" fill="none" stroke="#4a4a4a" stroke-width="2"/><rect x="18" y="6.5" width="3.8" height="19" fill="#4a4a4a"/></svg><div style="position:absolute;left:1994px;top:797.8px;width:998px;height:51.700000000000045px;background:#d4d4d4"></div><div style="position:absolute;left:2156px;top:849.5px;width:18px;height:157.0px;background:#d4d4d4"></div><div style="position:absolute;left:2042.4px;top:331.35px;line-height:26px;font-size:22px;font-family:'Liberation Mono', monospace;color:#000;font-weight:400;white-space:pre;letter-spacing:0.045px"><span style="color:#c0c0c0">&lt;!DOCTYPE html&gt;</span></div><div style="position:absolute;left:2042.4px;top:357.35px;line-height:26px;font-size:22px;font-family:'Liberation Mono', monospace;color:#000;font-weight:400;white-space:pre;letter-spacing:0.045px"><span style="color:#aa0d91">&lt;html</span><span style="color:#836c28"> lang</span><span style="color:#aa0d91">=&quot;</span><span style="color:#c41a16">en</span><span style="color:#aa0d91">&quot;&gt;</span></div><svg style="position:absolute;left:2015.9px;top:362.59999999999997px;" width="18" height="14" viewBox="0 0 18 14"><path d="M0 0 H18 L9 14 Z" fill="#8a8a8a"/></svg><div style="position:absolute;left:2070.4px;top:383.35px;line-height:26px;font-size:22px;font-family:'Liberation Mono', monospace;color:#000;font-weight:400;white-space:pre;letter-spacing:0.045px"><span style="color:#aa0d91">&lt;head&gt;</span><span style="color:#000">…</span><span style="color:#aa0d91">&lt;/head&gt;</span></div><svg style="position:absolute;left:2046.0px;top:386.7px;" width="15" height="18" viewBox="0 0 15 18"><path d="M0 0 L15 9 L0 18 Z" fill="#8a8a8a"/></svg><div style="position:absolute;left:2070.4px;top:409.35px;line-height:26px;font-size:22px;font-family:'Liberation Mono', monospace;color:#000;font-weight:400;white-space:pre;letter-spacing:0.045px"><span style="color:#aa0d91">&lt;body</span><span style="color:#836c28"> class</span><span style="color:#aa0d91">=&quot;</span><span style="color:#c41a16">ck-inspector-body-expanded</span><span style="color:#aa0d91">&quot;&gt;</span></div><svg style="position:absolute;left:2043.9px;top:414.59999999999997px;" width="18" height="14" viewBox="0 0 18 14"><path d="M0 0 H18 L9 14 Z" fill="#8a8a8a"/></svg><div style="position:absolute;left:2098.4px;top:435.35px;line-height:26px;font-size:22px;font-family:'Liberation Mono', monospace;color:#000;font-weight:400;white-space:pre;letter-spacing:0.045px"><span style="color:#aa0d91">&lt;div</span><span style="color:#836c28"> id</span><span style="color:#aa0d91">=&quot;</span><span style="color:#c41a16">editor</span><span style="color:#aa0d91">&quot;</span><span style="color:#836c28"> style</span><span style="color:#aa0d91">=&quot;</span><span style="color:#c41a16">display: none;</span><span style="color:#aa0d91">&quot;&gt;</span><span style="color:#000">…</span><span style="color:#aa0d91">&lt;/div&gt;</span></div><svg style="position:absolute;left:2074.0px;top:438.7px;" width="15" height="18" viewBox="0 0 15 18"><path d="M0 0 L15 9 L0 18 Z" fill="#8a8a8a"/></svg><div style="position:absolute;left:2098.4px;top:461.35px;line-height:26px;font-size:22px;font-family:'Liberation Mono', monospace;color:#000;font-weight:400;white-space:pre;letter-spacing:0.045px"><span style="color:#aa0d91">&lt;div</span><span style="color:#836c28"> class</span><span style="color:#aa0d91">=&quot;</span><span style="color:#c41a16">ck ck-reset ck-editor ck-rounded-corners</span><span style="color:#aa0d91">&quot;</span><span style="color:#836c28"> role</span><span style="color:#aa0d91">=</span></div><svg style="position:absolute;left:2071.9px;top:466.59999999999997px;" width="18" height="14" viewBox="0 0 18 14"><path d="M0 0 H18 L9 14 Z" fill="#8a8a8a"/></svg><div style="position:absolute;left:2069.4px;top:487.35px;line-height:26px;font-size:22px;font-family:'Liberation Mono', monospace;color:#000;font-weight:400;white-space:pre;letter-spacing:0.045px"><span style="color:#aa0d91">&quot;</span><span style="color:#c41a16">application</span><span style="color:#aa0d91">&quot;</span><span style="color:#836c28"> dir</span><span style="color:#aa0d91">=&quot;</span><span style="color:#c41a16">ltr</span><span style="color:#aa0d91">&quot;</span><span style="color:#836c28"> lang</span><span style="color:#aa0d91">=&quot;</span><span style="color:#c41a16">en</span><span style="color:#aa0d91">&quot;</span><span style="color:#836c28"> aria-labelledby</span><span style="color:#aa0d91">=&quot;</span><span style="color:#c41a16">ck-editor__aria-</span></div><div style="position:absolute;left:2070.4px;top:513.35px;line-height:26px;font-size:22px;font-family:'Liberation Mono', monospace;color:#000;font-weight:400;white-space:pre;letter-spacing:0.045px"><span style="color:#c41a16">label_e63cbbfece34c53ce23501062343f49b8</span><span style="color:#aa0d91">&quot;&gt;</span></div><div style="position:absolute;left:2126.4px;top:539.35px;line-height:26px;font-size:22px;font-family:'Liberation Mono', monospace;color:#000;font-weight:400;white-space:pre;letter-spacing:0.045px"><span style="color:#aa0d91">&lt;label</span><span style="color:#836c28"> class</span><span style="color:#aa0d91">=&quot;</span><span style="color:#c41a16">ck ck-label ck-voice-label</span><span style="color:#aa0d91">&quot;</span><span style="color:#836c28"> id</span><span style="color:#aa0d91">=&quot;</span><span style="color:#c41a16">ck-editor__aria-</span></div><div style="position:absolute;left:2126.4px;top:565.35px;line-height:26px;font-size:22px;font-family:'Liberation Mono', monospace;color:#000;font-weight:400;white-space:pre;letter-spacing:0.045px"><span style="color:#c41a16">label_e63cbbfece34c53ce23501062343f49b8</span><span style="color:#aa0d91">&quot;&gt;</span><span style="color:#000">Rich Text</span></div><div style="position:absolute;left:2126.4px;top:591.35px;line-height:26px;font-size:22px;font-family:'Liberation Mono', monospace;color:#000;font-weight:400;white-space:pre;letter-spacing:0.045px"><span style="color:#000">Editor</span><span style="color:#aa0d91">&lt;/label&gt;</span></div><div style="position:absolute;left:2126.4px;top:617.35px;line-height:26px;font-size:22px;font-family:'Liberation Mono', monospace;color:#000;font-weight:400;white-space:pre;letter-spacing:0.045px"><span style="color:#aa0d91">&lt;div</span><span style="color:#836c28"> class</span><span style="color:#aa0d91">=&quot;</span><span style="color:#c41a16">ck ck-editor__top ck-reset_all</span><span style="color:#aa0d91">&quot;</span><span style="color:#836c28"> role</span><span style="color:#aa0d91">=&quot;</span><span style="color:#c41a16">presentation</span><span style="color:#aa0d91">&quot;&gt;</span></div><svg style="position:absolute;left:2102.0px;top:620.7px;" width="15" height="18" viewBox="0 0 15 18"><path d="M0 0 L15 9 L0 18 Z" fill="#8a8a8a"/></svg><div style="position:absolute;left:2098.4px;top:643.35px;line-height:26px;font-size:22px;font-family:'Liberation Mono', monospace;color:#000;font-weight:400;white-space:pre;letter-spacing:0.045px"><span style="color:#000">…</span><span style="color:#aa0d91">&lt;/div&gt;</span></div><div style="position:absolute;left:2126.4px;top:669.35px;line-height:26px;font-size:22px;font-family:'Liberation Mono', monospace;color:#000;font-weight:400;white-space:pre;letter-spacing:0.045px"><span style="color:#aa0d91">&lt;div</span><span style="color:#836c28"> class</span><span style="color:#aa0d91">=&quot;</span><span style="color:#c41a16">ck ck-editor__main</span><span style="color:#aa0d91">&quot;</span><span style="color:#836c28"> role</span><span style="color:#aa0d91">=&quot;</span><span style="color:#c41a16">presentation</span><span style="color:#aa0d91">&quot;&gt;</span></div><svg style="position:absolute;left:2099.9px;top:674.6px;" width="18" height="14" viewBox="0 0 18 14"><path d="M0 0 H18 L9 14 Z" fill="#8a8a8a"/></svg><div style="position:absolute;left:2154.4px;top:695.35px;line-height:26px;font-size:22px;font-family:'Liberation Mono', monospace;color:#000;font-weight:400;white-space:pre;letter-spacing:0.045px"><span style="color:#aa0d91">&lt;div</span><span style="color:#836c28"> class</span><span style="color:#aa0d91">=&quot;</span><span style="color:#c41a16">ck ck-content ck-editor__editable ck-rounded-</span></div><svg style="position:absolute;left:2127.9px;top:700.6px;" width="18" height="14" viewBox="0 0 18 14"><path d="M0 0 H18 L9 14 Z" fill="#8a8a8a"/></svg><div style="position:absolute;left:2126.4px;top:721.35px;line-height:26px;font-size:22px;font-family:'Liberation Mono', monospace;color:#000;font-weight:400;white-space:pre;letter-spacing:0.045px"><span style="color:#c41a16">corners ck-editor__editable_inline ck-focused</span><span style="color:#aa0d91">&quot;</span><span style="color:#836c28"> role</span><span style="color:#aa0d91">=&quot;</span><span style="color:#c41a16">textbox</span><span style="color:#aa0d91">&quot;</span></div><div style="position:absolute;left:2126.4px;top:747.35px;line-height:26px;font-size:22px;font-family:'Liberation Mono', monospace;color:#000;font-weight:400;white-space:pre;letter-spacing:0.045px"><span style="color:#836c28">aria-label</span><span style="color:#aa0d91">=&quot;</span><span style="color:#c41a16">Rich Text Editor, main</span><span style="color:#aa0d91">&quot;</span><span style="color:#836c28"> contenteditable</span><span style="color:#aa0d91">=&quot;</span><span style="color:#c41a16">true</span><span style="color:#aa0d91">&quot;&gt;</span></div><div style="position:absolute;left:2182.4px;top:773.35px;line-height:26px;font-size:22px;font-family:'Liberation Mono', monospace;color:#000;font-weight:400;white-space:pre;letter-spacing:0.045px"><span style="color:#aa0d91">&lt;p&gt;</span><span style="color:#000">This is a simple box:</span><span style="color:#aa0d91">&lt;/p&gt;</span></div><div style="position:absolute;left:2182.4px;top:799.35px;line-height:26px;font-size:22px;font-family:'Liberation Mono', monospace;color:#000;font-weight:400;white-space:pre;letter-spacing:0.045px"><span style="color:#aa0d91">&lt;section</span><span style="color:#836c28"> class</span><span style="color:#aa0d91">=&quot;</span><span style="color:#c41a16">simple-box ck-widget ck-widget_selected</span><span style="color:#aa0d91">&quot;</span></div><svg style="position:absolute;left:2155.9px;top:804.6px;" width="18" height="14" viewBox="0 0 18 14"><path d="M0 0 H18 L9 14 Z" fill="#8a8a8a"/></svg><div style="position:absolute;left:2154.4px;top:825.35px;line-height:26px;font-size:22px;font-family:'Liberation Mono', monospace;color:#000;font-weight:400;white-space:pre;letter-spacing:0.045px"><span style="color:#836c28">contenteditable</span><span style="color:#aa0d91">=&quot;</span><span style="color:#c41a16">false</span><span style="color:#aa0d91">&quot;&gt;</span><span style="color:#9b9b9b"> = $0</span></div><div style="position:absolute;left:2210.4px;top:851.35px;line-height:26px;font-size:22px;font-family:'Liberation Mono', monospace;color:#000;font-weight:400;white-space:pre;letter-spacing:0.045px"><span style="color:#aa0d91">&lt;h1</span><span style="color:#836c28"> class</span><span style="color:#aa0d91">=&quot;</span><span style="color:#c41a16">simple-box-title ck-editor__editable ck-</span></div><div style="position:absolute;left:2210.4px;top:877.35px;line-height:26px;font-size:22px;font-family:'Liberation Mono', monospace;color:#000;font-weight:400;white-space:pre;letter-spacing:0.045px"><span style="color:#c41a16">editor__nested-editable</span><span style="color:#aa0d91">&quot;</span><span style="color:#836c28"> contenteditable</span><span style="color:#aa0d91">=&quot;</span><span style="color:#c41a16">true</span><span style="color:#aa0d91">&quot;&gt;</span><span style="color:#000">Box</span></div><div style="position:absolute;left:2210.4px;top:903.35px;line-height:26px;font-size:22px;font-family:'Liberation Mono', monospace;color:#000;font-weight:400;white-space:pre;letter-spacing:0.045px"><span style="color:#000">title</span><span style="color:#aa0d91">&lt;/h1&gt;</span></div><div style="position:absolute;left:2210.4px;top:929.35px;line-height:26px;font-size:22px;font-family:'Liberation Mono', monospace;color:#000;font-weight:400;white-space:pre;letter-spacing:0.045px"><span style="color:#aa0d91">&lt;div</span><span style="color:#836c28"> class</span><span style="color:#aa0d91">=&quot;</span><span style="color:#c41a16">simple-box-description ck-editor__editable ck-</span></div><svg style="position:absolute;left:2186.0px;top:932.7px;" width="15" height="18" viewBox="0 0 15 18"><path d="M0 0 L15 9 L0 18 Z" fill="#8a8a8a"/></svg><div style="position:absolute;left:2182.4px;top:955.35px;line-height:26px;font-size:22px;font-family:'Liberation Mono', monospace;color:#000;font-weight:400;white-space:pre;letter-spacing:0.045px"><span style="color:#c41a16">editor__nested-editable</span><span style="color:#aa0d91">&quot;</span><span style="color:#836c28"> contenteditable</span><span style="color:#aa0d91">=&quot;</span><span style="color:#c41a16">true</span><span style="color:#aa0d91">&quot;&gt;</span><span style="color:#000">…</span><span style="color:#aa0d91">&lt;/div&gt;</span></div><div style="position:absolute;left:2182.4px;top:981.35px;line-height:26px;font-size:22px;font-family:'Liberation Mono', monospace;color:#000;font-weight:400;white-space:pre;letter-spacing:0.045px"><span style="color:#aa0d91">&lt;/section&gt;</span></div><div style="position:absolute;left:2182.4px;top:1007.35px;line-height:26px;font-size:22px;font-family:'Liberation Mono', monospace;color:#000;font-weight:400;white-space:pre;letter-spacing:0.045px"><span style="color:#aa0d91">&lt;div</span><span style="color:#836c28"> style</span><span style="color:#aa0d91">=&quot;</span><span style="color:#c41a16">position: fixed; top: 0px; left: -9999px; width:</span></div><div style="position:absolute;left:2182.4px;top:1033.35px;line-height:26px;font-size:22px;font-family:'Liberation Mono', monospace;color:#000;font-weight:400;white-space:pre;letter-spacing:0.045px"><span style="color:#c41a16">42px;</span><span style="color:#aa0d91">&quot;&gt;</span><span style="color:#000">simple box widget</span><span style="color:#aa0d91">&lt;/div&gt;</span></div><div style="position:absolute;left:2154.4px;top:1059.35px;line-height:26px;font-size:22px;font-family:'Liberation Mono', monospace;color:#000;font-weight:400;white-space:pre;letter-spacing:0.045px"><span style="color:#aa0d91">&lt;/div&gt;</span></div><div style="position:absolute;left:2126.4px;top:1085.35px;line-height:26px;font-size:22px;font-family:'Liberation Mono', monospace;color:#000;font-weight:400;white-space:pre;letter-spacing:0.045px"><span style="color:#aa0d91">&lt;/div&gt;</span></div><div style="position:absolute;left:2098.4px;top:1111.35px;line-height:26px;font-size:22px;font-family:'Liberation Mono', monospace;color:#000;font-weight:400;white-space:pre;letter-spacing:0.045px"><span style="color:#aa0d91">&lt;/div&gt;</span></div><div style="position:absolute;left:2098.4px;top:1137.35px;line-height:26px;font-size:22px;font-family:'Liberation Mono', monospace;color:#000;font-weight:400;white-space:pre;letter-spacing:0.045px"><span style="color:#aa0d91">&lt;script</span><span style="color:#836c28"> src</span><span style="color:#aa0d91">=&quot;</span><span style="color:#1c00cf">dist/bundle.js</span><span style="color:#aa0d91">&quot;&gt;&lt;/script&gt;</span></div><div style="position:absolute;left:2098.4px;top:1163.35px;line-height:26px;font-size:22px;font-family:'Liberation Mono', monospace;color:#000;font-weight:400;white-space:pre;letter-spacing:0.045px"><span style="color:#aa0d91">&lt;div</span><span style="color:#836c28"> class</span><span style="color:#aa0d91">=&quot;</span><span style="color:#c41a16">ck ck-reset_all ck-body ck-rounded-corners</span><span style="color:#aa0d91">&quot;&gt;&lt;/div&gt;</span></div><div style="position:absolute;left:2098.4px;top:1189.35px;line-height:26px;font-size:22px;font-family:'Liberation Mono', monospace;color:#000;font-weight:400;white-space:pre;letter-spacing:0.045px"><span style="color:#aa0d91">&lt;div</span><span style="color:#836c28"> class</span><span style="color:#aa0d91">=&quot;</span><span style="color:#c41a16">ck-inspector-wrapper</span><span style="color:#aa0d91">&quot;&gt;</span><span style="color:#000">…</span><span style="color:#aa0d91">&lt;/div&gt;</span></div><svg style="position:absolute;left:2074.0px;top:1192.7px;" width="15" height="18" viewBox="0 0 15 18"><path d="M0 0 L15 9 L0 18 Z" fill="#8a8a8a"/></svg><div style="position:absolute;left:2070.4px;top:1215.35px;line-height:26px;font-size:22px;font-family:'Liberation Mono', monospace;color:#000;font-weight:400;white-space:pre;letter-spacing:0.045px"><span style="color:#aa0d91">&lt;/body&gt;</span></div><div style="position:absolute;left:2042.4px;top:1241.35px;line-height:26px;font-size:22px;font-family:'Liberation Mono', monospace;color:#000;font-weight:400;white-space:pre;letter-spacing:0.045px"><span style="color:#aa0d91">&lt;/html&gt;</span></div><div style="position:absolute;left:1994px;top:1770px;width:998px;height:2px;background:#b4b4b4"></div><svg style="position:absolute;left:2006px;top:1789px;" width="18" height="22" viewBox="0 0 18 22"><path d="M5 3 L13 11 L5 19" fill="none" stroke="#3f9cf3" stroke-width="4.2" stroke-linecap="round" stroke-linejoin="round"/></svg></body></html>
